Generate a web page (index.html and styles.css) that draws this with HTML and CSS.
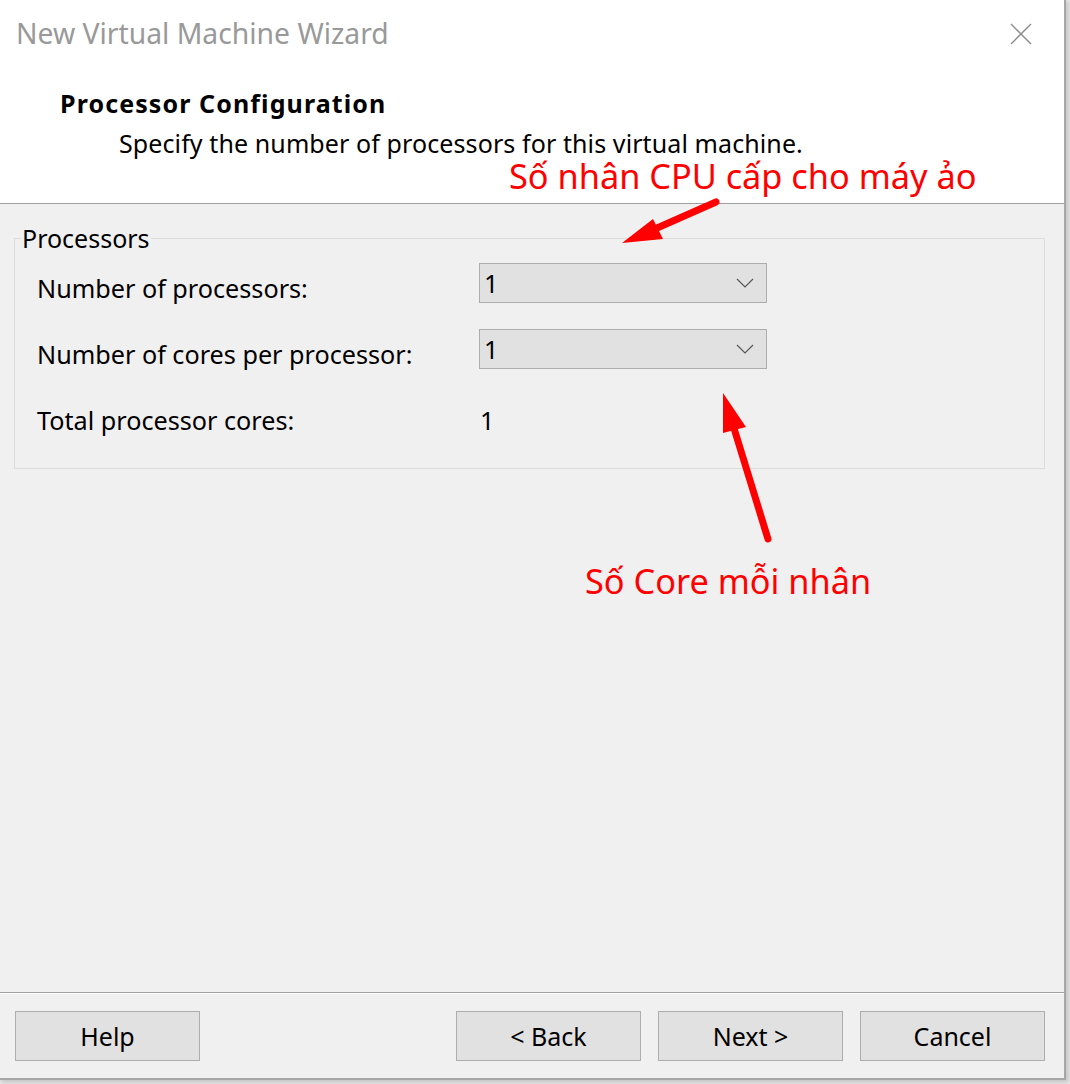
FILE: index.html
```html
<!DOCTYPE html>
<html lang="vi">
<head>
<meta charset="utf-8">
<title>New Virtual Machine Wizard</title>
<link rel="stylesheet" href="styles.css">
</head>
<body>
<div class="window">
  <div class="header">
    <div class="titlebar">
      <span class="title">New Virtual Machine Wizard</span>
      <svg class="close" width="22" height="22" viewBox="0 0 22 22"><path d="M1 1 L21 21 M21 1 L1 21" stroke="#8a8a8a" stroke-width="1.4" fill="none"/></svg>
    </div>
    <div class="heading">
      <div class="h-title">Processor Configuration</div>
      <div class="h-sub">Specify the number of processors for this virtual machine.</div>
    </div>
  </div>
  <div class="content">
    <fieldset class="group">
      <legend>Processors</legend>
      <div class="row">
        <span class="label">Number of processors:</span>
        <div class="combo"><span>1</span><svg width="18" height="10" viewBox="0 0 18 10"><path d="M1 1 L9 9 L17 1" stroke="#555" stroke-width="1.1" fill="none"/></svg></div>
      </div>
      <div class="row">
        <span class="label">Number of cores per processor:</span>
        <div class="combo"><span>1</span><svg width="18" height="10" viewBox="0 0 18 10"><path d="M1 1 L9 9 L17 1" stroke="#555" stroke-width="1.1" fill="none"/></svg></div>
      </div>
      <div class="row">
        <span class="label">Total processor cores:</span>
        <span class="label value">1</span>
      </div>
    </fieldset>
  </div>
  <div class="footer">
    <button class="btn">Help</button>
    <div class="spacer"></div>
    <button class="btn">&lt; Back</button>
    <button class="btn">Next &gt;</button>
    <button class="btn">Cancel</button>
  </div>
  <div class="note note-cpu">Số nhân CPU cấp cho máy ảo</div>
  <div class="note note-core">Số Core mỗi nhân</div>
  <svg class="arrows" width="1070" height="1084" viewBox="0 0 1070 1084">
    <line x1="716" y1="202" x2="648" y2="232" stroke="#ff0000" stroke-width="7" stroke-linecap="round"/>
    <polygon points="622,243 653,219 663,239" fill="#ff0000"/>
    <line x1="768" y1="539" x2="733" y2="425" stroke="#ff0000" stroke-width="7" stroke-linecap="round"/>
    <polygon points="723,393 723,433 746,427" fill="#ff0000"/>
  </svg>
</div>
</body>
</html>
```
FILE: styles.css
```css
html, body {
  margin: 0;
  padding: 0;
  background: #e4e4e4;
}
body {
  width: 1070px;
  height: 1084px;
  overflow: hidden;
  font-family: "Noto Sans", "Open Sans", sans-serif;
  color: #000;
}
.window {
  position: relative;
  width: 1064px;
  height: 1078px;
  background: #f0f0f0;
  border-right: 2px solid #a6a6a6;
  border-bottom: 2px solid #a6a6a6;
  box-shadow: 2px 2px 4px rgba(0,0,0,0.15);
  display: flex;
  flex-direction: column;
}
.header {
  background: #fff;
  height: 203px;
  border-bottom: 1px solid #a0a0a0;
  box-sizing: content-box;
}
.titlebar {
  height: 70px;
  box-sizing: border-box;
  display: flex;
  align-items: center;
  justify-content: space-between;
  padding: 0 32px 4px 16px;
}
.title {
  font-size: 28.3px;
  color: #999;
}
.close { margin-top: 2px; }
.heading {
  padding-left: 60px;
}
.h-title {
  font-size: 25px;
  font-weight: bold;
  letter-spacing: 1.1px;
  line-height: 30px;
  margin-top: 18px;
}
.h-sub {
  font-size: 25px;
  letter-spacing: 0.1px;
  line-height: 30px;
  margin-top: 10px;
  padding-left: 59px;
}
.content {
  flex: 1;
  padding: 19px 19px 0 14px;
}
.group {
  margin: 0;
  border: 1px solid #dcdcdc;
  padding: 10px 22px 0 22px;
  height: 246px;
  box-sizing: border-box;
}
.group legend {
  font-size: 25px;
  padding: 0 1px;
  margin-left: -16px;
  line-height: 30px;
}
.row {
  display: flex;
  align-items: flex-start;
  height: 40px;
  margin-bottom: 26px;
  font-size: 25.2px;
}
.label {
  width: 442px;
  line-height: 40px;
  padding-top: 5px;
}
.value { width: auto; margin-left: 1px; }
.combo {
  width: 288px;
  height: 40px;
  box-sizing: border-box;
  border: 1px solid #adadad;
  background: #e1e1e1;
  display: flex;
  align-items: center;
  justify-content: space-between;
  padding: 0 12px 0 4px;
  line-height: 38px;
}
.footer {
  height: 86px;
  box-sizing: border-box;
  border-top: 1px solid #a0a0a0;
  box-shadow: inset 0 1px 0 #fff;
  display: flex;
  align-items: flex-start;
  padding: 18px 19px 0 15px;
  gap: 17px;
}
.spacer { flex: 1; }
.btn {
  width: 185px;
  height: 50px;
  border: 1px solid #adadad;
  background: #e1e1e1;
  font-family: inherit;
  font-size: 25px;
  color: #000;
  padding: 0;
}
.note {
  position: absolute;
  color: #ff0000;
  font-size: 34.3px;
  line-height: 34px;
  white-space: nowrap;
}
.note-cpu { left: 509px; top: 159px; }
.note-core { left: 585px; top: 564px; }
.arrows {
  position: absolute;
  left: 0;
  top: 0;
  pointer-events: none;
}
```
